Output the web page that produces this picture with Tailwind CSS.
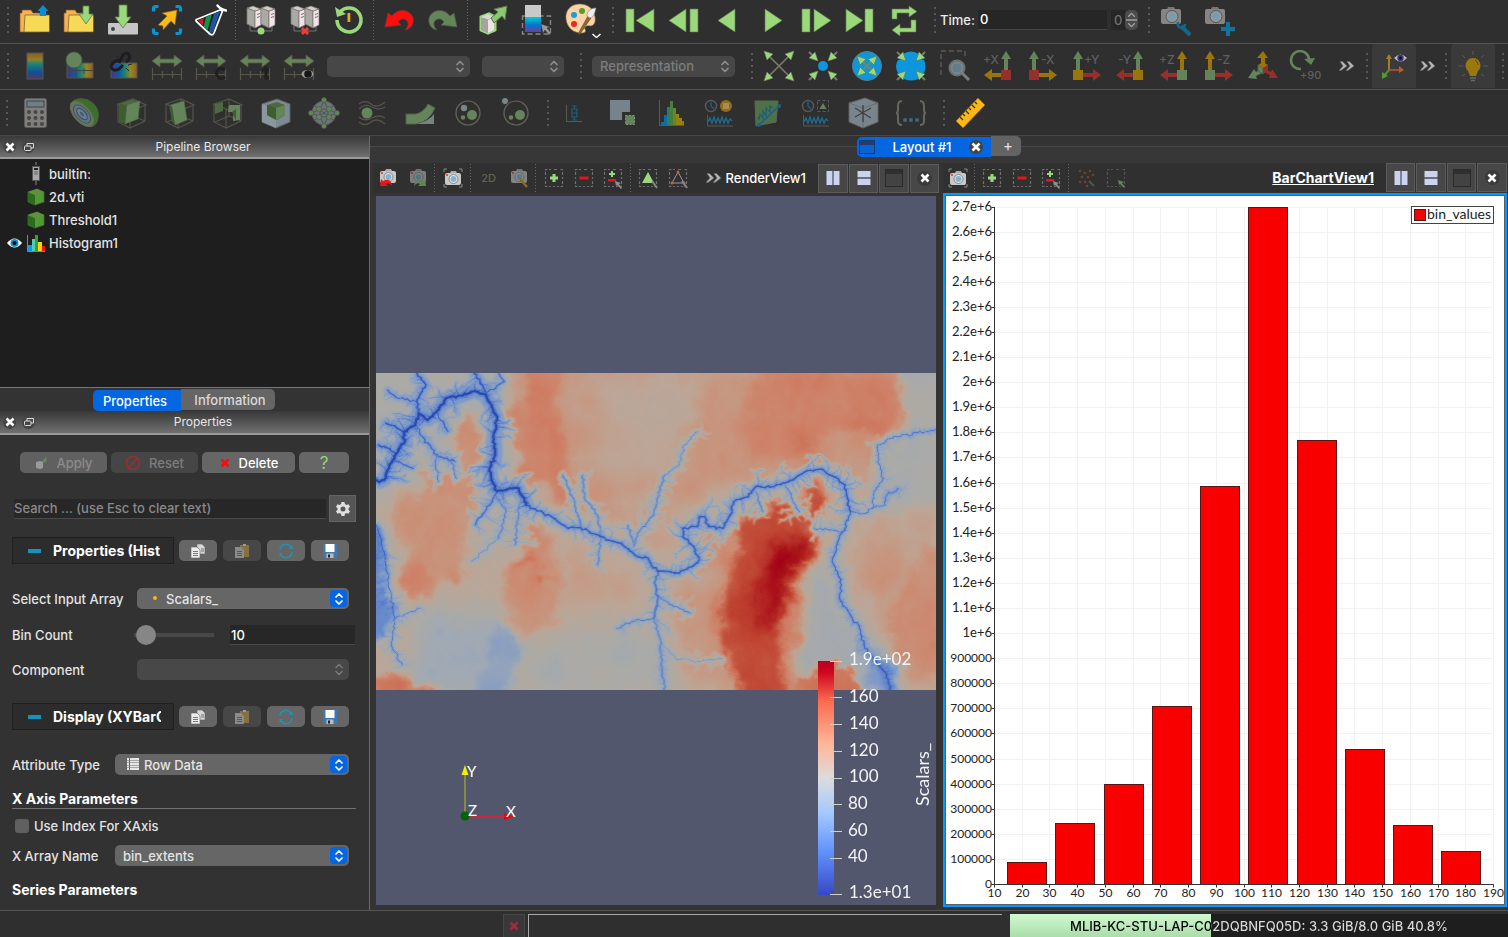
<!DOCTYPE html>
<html lang="en">
<head>
<meta charset="utf-8">
<title>ParaView</title>
<script src="https://cdn.jsdelivr.net/npm/@tailwindcss/browser@4"></script>
</head>
<body class="bg-[#2f2f2f]">
<svg class="absolute size-0" aria-hidden="true">
  <defs>
    <linearGradient id="rainbow" x1="0" y1="0" x2="0" y2="1"><stop offset="0" stop-color="#94581c"/><stop offset=".25" stop-color="#8a8428"/><stop offset=".45" stop-color="#17807a"/><stop offset=".75" stop-color="#124f96"/><stop offset="1" stop-color="#563565"/></linearGradient>
    <linearGradient id="rainbowH"><stop offset="0" stop-color="#4b3377"/><stop offset=".3" stop-color="#0d5a9e"/><stop offset=".55" stop-color="#24836c"/><stop offset=".75" stop-color="#8f8a22"/><stop offset="1" stop-color="#965c20"/></linearGradient>
    <linearGradient id="cyanPurple" x1="0" y1="0" x2="0" y2="1"><stop offset="0" stop-color="#00d0d0"/><stop offset=".5" stop-color="#0078d0"/><stop offset="1" stop-color="#6b3f9a"/></linearGradient>
    <linearGradient id="coolwarm" x1="0" y1="0" x2="0" y2="1"><stop offset="0" stop-color="#b8001f"/><stop offset=".05" stop-color="#cf0722"/><stop offset=".17" stop-color="#fb6a4e"/><stop offset=".35" stop-color="#ffb596"/><stop offset=".5" stop-color="#dcdcdc"/><stop offset=".65" stop-color="#a5c8fd"/><stop offset=".82" stop-color="#5f90fc"/><stop offset="1" stop-color="#3648c4"/></linearGradient>
  </defs>
  <symbol id="i-servers" viewBox="0 0 32 32">
    <path d="M5 21v6h22v-6" fill="none" stroke="#777"/>
    <g stroke="#77736a" stroke-width=".7"><path d="M2 4l8 3v17l-8-4z" fill="#aaa9a6"/><path d="M10 7l6-2v16l-6 3z" fill="#f0e4ea"/><path d="M2 4l6-2 8 3-6 2z" fill="#cfcfcc"/><path d="M16 4l8 3v17l-8-4z" fill="#aaa9a6"/><path d="M24 7l6-2v16l-6 3z" fill="#f0e4ea"/><path d="M16 4l6-2 8 3-6 2z" fill="#cfcfcc"/></g><path d="M12 10.500l3-1M12 13.500l3-1M26 10.500l3-1M26 13.500l3-1" stroke="#77736a"/>
  </symbol>
  <symbol id="i-range" viewBox="0 0 32 32">
    <path d="M1 11l8-6v4h14V5l8 6-8 6v-4H9v4z" fill="#64855a" stroke="#57554a" stroke-width=".8"/>
    <path d="M1.500 18v12M30.500 18v12M1 24.500h30M11.500 21v7M21.500 21v7" stroke="#57564c" stroke-width="1.200" fill="none"/>
  </symbol>
  <symbol id="i-box" viewBox="0 0 32 32">
    <path d="M2 7l15-5 13 6-13 5zM2 7v18l12 6V12M14 31l15-7V8M17 2v17L3 25M17 19l12 5" fill="none" stroke="#55534a" stroke-width="1.200"/>
  </symbol>
  <symbol id="i-chev" viewBox="0 0 10 14"><path d="M2 5l3-3 3 3M2 9l3 3 3-3" fill="none" stroke="currentColor" stroke-width="1.700" stroke-linecap="round" stroke-linejoin="round"/></symbol>
  <symbol id="i-more" viewBox="0 0 16 12"><path d="M1 1.500h2.500L8 6l-6 4.500H0L4 6zM8 1.500h2.500L15 6l-6 4.500H7L11 6z" fill="#b4b4b4" stroke="#666" stroke-width=".5"/></symbol>
  <symbol id="i-cam" viewBox="0 0 24 24">
    <rect x="4" y="7" width="16" height="12" rx="2" fill="#c9c9c9"/><path d="M9 7l1-2h5l1 2z" fill="#aaa"/><circle cx="12.500" cy="13" r="4.500" fill="#e9e9e9" stroke="#858585"/><circle cx="12.500" cy="13" r="3" fill="#7fb5d0"/><circle cx="6" cy="9" r="1" fill="#d33"/>
  </symbol>
  <symbol id="i-sel" viewBox="0 0 24 24"><path d="M3.500 9V3.500H9M12 3.500h3M20.500 9V3.500H17M3.500 15v5.500H9M20.500 15v5.500H15M3.500 11v2M20.500 11v2M11 20.500h2" fill="none" stroke="#6e6e6e" stroke-width="1.200" stroke-dasharray="3 1.500"/></symbol>
  <symbol id="i-plus" viewBox="0 0 24 24"><path d="M10.500 8h3v2.500H16v3h-2.500V16h-3v-2.500H8v-3h2.500z" fill="#9bd77b"/></symbol>
  <symbol id="i-minus" viewBox="0 0 24 24"><rect x="7.500" y="10.500" width="9" height="3" fill="#e8141c"/></symbol>
  <symbol id="i-plusminus" viewBox="0 0 24 24"><path d="M10 5h2v2h2v2h-2v2h-2V9H8V7h2z" fill="#9bd77b"/><rect x="7" y="13" width="8" height="2.500" fill="#e8141c"/><path d="M14 15l6 2-2 1 3 4-1 1-4-4-1 1z" fill="#8d8d8d"/></symbol>
  <symbol id="i-x" viewBox="0 0 12 12"><path d="M2.500 2.500l7 7M9.500 2.500l-7 7" stroke="currentColor" stroke-width="2.600"/></symbol>
  <symbol id="i-float" viewBox="0 0 12 12"><rect x="1.500" y="5" width="6.500" height="4.500" rx="1" fill="none" stroke="#ddd"/><path d="M4 5V2.500h6.500V7H8" fill="none" stroke="#ddd"/></symbol>
  <symbol id="i-cube" viewBox="0 0 18 18"><path d="M1 4l9-3 7 3v10l-9 3-7-3z" fill="#4f9a33" stroke="#53633f" stroke-width=".8"/><path d="M1 4l7 3v10l-7-3z" fill="#2c6b1c"/><path d="M1 4l9-3 7 3-9 3z" fill="#62903f"/></symbol>
  <symbol id="i-copy" viewBox="0 0 16 16"><path d="M7 1h5l3 3v7H7z" fill="#d6d6d6" stroke="#666" stroke-width=".6"/><path d="M1 4h6l3 3v8H1z" fill="#ececec" stroke="#666" stroke-width=".6"/><path d="M3 8.500h5M3 10.500h5M3 12.500h5M11 6h3M11 8h3" stroke="#777"/></symbol>
  <symbol id="i-paste" viewBox="0 0 16 16"><rect x="6" y="2" width="9" height="12" fill="#85703f"/><rect x="9" y="1" width="3" height="2" fill="#999"/><path d="M1 4h6l3 3v8H1z" fill="#8b8b8b"/><path d="M3 8.500h5M3 10.500h5M3 12.500h5" stroke="#555"/></symbol>
  <symbol id="i-refresh" viewBox="0 0 16 16"><path d="M2 7a6 6 0 0 1 11-3M14 9a6 6 0 0 1-11 3" fill="none" stroke="#1f93b5" stroke-width="1.500"/><path d="M14.500 2v4h-4zM1.500 14v-4h4z" fill="#1f93b5"/></symbol>
  <symbol id="i-save" viewBox="0 0 16 16"><path d="M1 1h14v14H2l-1-1z" fill="#3e78b4"/><rect x="3.500" y="1" width="9" height="8" fill="#fff"/><rect x="4.500" y="10.500" width="7" height="4.500" fill="#bbb"/><rect x="6" y="11.500" width="2" height="3" fill="#222"/></symbol>
  <symbol id="i-splitv" viewBox="0 0 14 16"><path d="M.5 1H6v14H.5zM8 1h5.500v14H8z" fill="#cbd3ee"/><path d="M6 1h2v14H6z" fill="#7c8296"/></symbol>
  <symbol id="i-splith" viewBox="0 0 14 16"><path d="M.5 1h13v6H.5zM.5 9h13v6H.5z" fill="#cbd3ee"/><path d="M.5 7h13v2H.5z" fill="#6a6f80"/></symbol>
  <symbol id="i-max" viewBox="0 0 18 18"><rect x=".5" y=".5" width="17" height="17" fill="#434343" stroke="#2b2b2b"/><rect x="1" y="1" width="16" height="4" fill="#2f2f2f"/></symbol>
</svg>

<div class="flex h-screen flex-col overflow-hidden bg-[#2f2f2f] font-['Inter',sans-serif] text-[13px] leading-4 font-medium text-[#e4e4e4]">

  <!-- Main controls -->
  <div role="toolbar" aria-label="Main controls" class="flex h-[43px] shrink-0 items-center pb-1">
    <div class="flex w-[13px] shrink-0 justify-end pr-1"><span class="h-[26px] w-0.5 bg-[repeating-linear-gradient(to_bottom,#585858_0_2px,transparent_2px_6px)]"></span></div>
    <button aria-label="Open" class="flex w-11 shrink-0 justify-center"><svg class="size-8" viewBox="0 0 32 32"><path d="M1 28V9h2V6h9l2 3h7v19z" fill="#fbb04c" stroke="#6b5a3a" stroke-width=".7"/><path d="M5 28l1-17h24.500v17z" fill="#f6d955" stroke="#6b5a3a" stroke-width=".7"/><path d="M24 1l5.500 6H27v5h-6V7h-2.500z" fill="#0b8fd0"/></svg></button>
    <button aria-label="Load state" class="flex w-11 shrink-0 justify-center"><svg class="size-8" viewBox="0 0 32 32"><path d="M1 28V9h2V6h9l2 3h7v19z" fill="#fbb04c" stroke="#6b5a3a" stroke-width=".7"/><path d="M5 28l1-17h24.500v17z" fill="#f6d955" stroke="#6b5a3a" stroke-width=".7"/><path d="M20 2h6v8h4l-7 10-7-10h4z" fill="#9bd77b" stroke="#5f7d4d" stroke-width=".8"/></svg></button>
    <button aria-label="Save data" class="flex w-11 shrink-0 justify-center"><svg class="size-8" viewBox="0 0 32 32"><rect x="1" y="19" width="30" height="11.500" rx="1" fill="#c6c6c6"/><circle cx="6" cy="25" r="2" fill="#444"/><path d="M12 1h8v12h4l-8 11L8 13h4z" fill="#9bd77b" stroke="#5f7d4d" stroke-width=".8"/></svg></button>
    <button aria-label="Save screenshot" class="flex w-11 shrink-0 justify-center"><svg class="size-8" viewBox="0 0 32 32"><path d="M2.500 7.500V4.500q0-2 2-2h3M24.500 2.500h3q2 0 2 2v3M29.500 24.500v3q0 2-2 2h-3M7.500 29.500h-3q-2 0-2-2v-3" fill="none" stroke="#0b93d2" stroke-width="3.200"/><path d="M26 6l-2 15-4-4-8 9 0-4-5-1 9-9-5-3z" fill="#fcb813" stroke="#7a6230" stroke-width=".6"/></svg></button>
    <button aria-label="Save state" class="flex w-11 shrink-0 justify-center"><svg class="size-8" viewBox="0 0 32 32"><path d="M25 6L1.500 15.500Q0.500 16.500 1.500 17.500L15.500 30.500Q18 31.500 19 29L27.500 7z" fill="#1d1d1d" stroke="#fff" stroke-width="1.800" stroke-linejoin="round"/><path d="M22.500 1.500Q25 5 31 6.500" fill="none" stroke="#fff" stroke-width="2.400" stroke-linecap="round"/><path d="M3 16.500l6-2.500-1.500 8z" fill="#d0182c"/><path d="M11 13l6-3-4.500 16.500-4-3.500z" fill="#12924a"/><path d="M19 9.500l6-2L18 28.500q-2 1-4-1z" fill="#1c56a0"/></svg></button>
    <div class="flex w-1.5 shrink-0 justify-start"><span class="ml-0.5 h-10 w-px bg-[repeating-linear-gradient(to_bottom,#666_0_1px,transparent_1px_3px)]"></span></div>
    <button aria-label="Connect" class="flex w-11 shrink-0 justify-center"><svg class="size-8" viewBox="0 0 32 32"><use href="#i-servers"/><circle cx="16" cy="27" r="3.500" fill="#9bd77b"/></svg></button>
    <button aria-label="Disconnect" class="flex w-11 shrink-0 justify-center"><svg class="size-8" viewBox="0 0 32 32"><use href="#i-servers"/><path d="M13 24l6 6M19 24l-6 6" stroke="#e8413a" stroke-width="3"/></svg></button>
    <button aria-label="Reset session" class="flex w-11 shrink-0 justify-center"><svg class="size-8" viewBox="0 0 32 32"><path d="M7 8a12 12 0 1 1-3 8" fill="none" stroke="#9bd77b" stroke-width="3.600"/><path d="M2 3l2 10 9-3z" fill="#9bd77b"/><rect x="14.500" y="9" width="2.800" height="9" fill="#e8a916"/></svg></button>
    <div class="flex w-1.5 shrink-0 justify-start"><span class="ml-0.5 h-10 w-px bg-[repeating-linear-gradient(to_bottom,#666_0_1px,transparent_1px_3px)]"></span></div>
    <button aria-label="Undo" class="flex w-11 shrink-0 justify-center"><svg class="size-8" viewBox="0 0 32 32"><path d="M2 23L5 9l4 3C15 4 27 5 30 14c1 6-2 11-8 12 4-4 4-8 1-10-3-2-6-1-8 2l3 3z" fill="#fe0d0d" stroke="#7a3a30" stroke-width=".7"/></svg></button>
    <button aria-label="Redo" disabled class="flex w-11 shrink-0 justify-center"><svg class="size-8" viewBox="0 0 32 32"><path d="M30 23L27 9l-4 3C17 4 5 5 2 14c-1 6 2 11 8 12-4-4-4-8-1-10 3-2 6-1 8 2l-3 3z" fill="#64855a" stroke="#4d5a45" stroke-width=".7"/></svg></button>
    <div class="flex w-1.5 shrink-0 justify-start"><span class="ml-0.5 h-10 w-px bg-[repeating-linear-gradient(to_bottom,#666_0_1px,transparent_1px_3px)]"></span></div>
    <button aria-label="Extract" class="flex w-11 shrink-0 justify-center"><svg class="size-8" viewBox="0 0 32 32"><path d="M4 13l8-3 6 3v13l-7 3-7-3z" fill="none" stroke="#9bd77b" stroke-width="3"/><path d="M4 13l7 3v13l-7-3z" fill="#a5a3a0"/><path d="M11 16l6-3v13l-6 3z" fill="#efe3e8"/><path d="M4 13l7-3 6 3-6 3z" fill="#d8d8d8"/><path d="M30 2l-2 14-3-4-8 7-3-5 7-6-4-3z" fill="#8cc872" stroke="#5a7549"/></svg></button>
    <button aria-label="Edit color map" class="flex w-11 shrink-0 justify-center"><svg class="size-8" viewBox="0 0 32 32"><rect x="1.500" y="12" width="28" height="18" fill="none" stroke="#888" stroke-width="1.400" stroke-dasharray="5 3"/><rect x="4" y="1" width="16" height="27" fill="#c9c9c9"/><rect x="4" y="13" width="16" height="15" fill="url(#cyanPurple)"/><path d="M20 20l9 3-3 1 4 5-2 2-4-5-2 3z" fill="#999" stroke="#444" stroke-width=".5"/></svg></button>
    <button aria-label="Load palette" class="flex w-11 shrink-0 justify-center"><svg class="h-9 w-10" viewBox="-4 -2 40 36"><path d="M15 0C6 0 0 6 1 15s8 14 15 14c5 0 5-2 4-4s2-4 5-3c4 0 6-4 5-9C29 5 23 0 15 0z" fill="#fbd3a4" stroke="#80694c" stroke-width=".6"/><circle cx="9" cy="11" r="3" fill="#16a0d8"/><circle cx="17" cy="7" r="3" fill="#5a9a2a"/><circle cx="9" cy="20" r="3" fill="#e8291c"/><path d="M13 30L23 12l3 2-11 16z" fill="#8a6b35" stroke="#5b4727" stroke-width=".6"/><path d="M22 12c0-5 4-8 9-8-1 4-2 9-6 10z" fill="#eee" stroke="#888" stroke-width=".6"/><path d="M27.500 30l4 3.500 4-3.500" fill="none" stroke="#fff" stroke-width="1.500"/></svg></button>
    <div class="flex w-[15px] shrink-0 justify-end pr-1"><span class="h-[26px] w-0.5 bg-[repeating-linear-gradient(to_bottom,#585858_0_2px,transparent_2px_6px)]"></span></div>
    <button aria-label="First frame" class="flex w-11 shrink-0 justify-center"><svg class="size-8" viewBox="0 0 32 32" fill="#9bd77b" stroke="#5f7d4d" stroke-width=".6"><path d="M2 5h8v23H2zM30 5v23L12 16.500z"/></svg></button>
    <button aria-label="Previous frame" class="flex w-11 shrink-0 justify-center"><svg class="size-8" viewBox="0 0 32 32" fill="#9bd77b" stroke="#5f7d4d" stroke-width=".6"><path d="M18 5v23L1 16.500zM22 5h8v23h-8z"/></svg></button>
    <button aria-label="Reverse" class="flex w-11 shrink-0 justify-center"><svg class="size-8" viewBox="0 0 32 32" fill="#9bd77b" stroke="#5f7d4d" stroke-width=".6"><path d="M23 5v23L6 16.500z"/></svg></button>
    <button aria-label="Play" class="flex w-11 shrink-0 justify-center"><svg class="size-8" viewBox="0 0 32 32" fill="#9bd77b" stroke="#5f7d4d" stroke-width=".6"><path d="M9 5v23l17-11.500z"/></svg></button>
    <button aria-label="Next frame" class="flex w-11 shrink-0 justify-center"><svg class="size-8" viewBox="0 0 32 32" fill="#9bd77b" stroke="#5f7d4d" stroke-width=".6"><path d="M2 5h8v23H2zM14 5v23l17-11.500z"/></svg></button>
    <button aria-label="Last frame" class="flex w-11 shrink-0 justify-center"><svg class="size-8" viewBox="0 0 32 32" fill="#9bd77b" stroke="#5f7d4d" stroke-width=".6"><path d="M2 5v23l17-11.500zM21 5h8v23h-8z"/></svg></button>
    <button aria-label="Loop" class="flex w-11 shrink-0 justify-center"><svg class="size-8" viewBox="0 0 32 32" fill="#9bd77b" stroke="#5f7d4d" stroke-width=".6"><path d="M4 15V5h17V2l8 5.500-8 5.500v-4H9v6zM28 16v12H12v4l-8-6 8-6v4h11v-8z"/></svg></button>
    <div class="flex w-[14px] shrink-0 justify-end pr-1"><span class="h-[26px] w-0.5 bg-[repeating-linear-gradient(to_bottom,#585858_0_2px,transparent_2px_6px)]"></span></div>
    <label for="time" class="w-[38px] shrink-0 text-[#ececec]">Time:</label>
    <input id="time" value="0" class="h-5 w-[129px] border-b border-[#454545] bg-[#262626] px-0.5 text-white outline-none">
    <input aria-label="Time step" value="0" disabled class="ml-1 h-5 w-3.5 bg-[#262626] px-[3px] text-[#6e6e6e]">
    <button aria-label="Step time" disabled class="flex h-5 w-[13px] items-center justify-center rounded-[5px] bg-[#4c4c4c] text-[#a0a0a0]"><svg class="h-5 w-[11px]" viewBox="0 0 10 18"><path d="M2 6l3-3 3 3M2 12l3 3 3-3M0 9h10" fill="none" stroke="currentColor" stroke-width="1.200"/></svg></button>
    <div class="flex w-4 shrink-0 justify-end pr-1"><span class="h-[26px] w-0.5 bg-[repeating-linear-gradient(to_bottom,#585858_0_2px,transparent_2px_6px)]"></span></div>
    <button aria-label="Adjust camera" disabled class="flex w-11 shrink-0 justify-center"><svg class="size-8" viewBox="0 0 32 32"><rect x="1" y="5" width="20" height="15" rx="2" fill="#858585"/><path d="M7 5l1-2h6l1 2z" fill="#777"/><circle cx="12" cy="12.500" r="6" fill="#999" stroke="#555"/><circle cx="12" cy="12.500" r="3.500" fill="#6fa0b5"/><path d="M21 22l9 9" stroke="#12688c" stroke-width="4"/><path d="M18 18q-1 5 3 6 4 0 4-4" fill="none" stroke="#12688c" stroke-width="2.600"/></svg></button>
    <button aria-label="Add camera" disabled class="flex w-11 shrink-0 justify-center"><svg class="size-8" viewBox="0 0 32 32"><rect x="1" y="5" width="20" height="15" rx="2" fill="#858585"/><path d="M7 5l1-2h6l1 2z" fill="#777"/><circle cx="12" cy="12.500" r="6" fill="#999" stroke="#555"/><circle cx="12" cy="12.500" r="3.500" fill="#6fa0b5"/><path d="M22 18h4v5h5v4h-5v5h-4v-5h-5v-4h5z" fill="#12749c"/></svg></button>
  </div>

  <!-- Color and camera controls -->
  <div role="toolbar" aria-label="Color and camera" class="flex h-[46px] shrink-0 items-center border-t border-[#555] pb-px">
    <div class="flex w-[13px] shrink-0 justify-end pr-1"><span class="h-[26px] w-0.5 bg-[repeating-linear-gradient(to_bottom,#585858_0_2px,transparent_2px_6px)]"></span></div>
    <button aria-label="Color legend" disabled class="flex w-11 shrink-0 justify-center"><svg class="size-8" viewBox="0 0 32 32"><rect x="8" y="3" width="16" height="26" fill="url(#rainbow)" stroke="#575757"/></svg></button>
    <button aria-label="Edit colors" disabled class="flex w-11 shrink-0 justify-center"><svg class="size-8" viewBox="0 0 32 32"><path d="M4 13h26v15H4z" fill="url(#rainbowH)" stroke="#555"/><path d="M4 20.500h26M13 13v15M21 18v6" stroke="#444"/><circle cx="11" cy="10" r="8" fill="#64855a" stroke="#4d5a45"/></svg></button>
    <button aria-label="Separate color map" disabled class="flex w-11 shrink-0 justify-center"><svg class="size-8" viewBox="0 0 32 32"><path d="M4 13h26v15H4z" fill="url(#rainbowH)" stroke="#555"/><path d="M12 13l4-8q4-4 6 0t-3 7M12 10q-8 2-8 7 2 5 8 2l4-4" fill="none" stroke="#1c1c22" stroke-width="3"/><path d="M21 15l4-1M19 18l3 3M10 6l1 2" stroke="#222"/></svg></button>
    <button aria-label="Rescale to data range" disabled class="flex w-11 shrink-0 justify-center"><svg class="size-8"><use href="#i-range"/></svg></button>
    <button aria-label="Rescale to custom range" disabled class="flex w-11 shrink-0 justify-center"><svg class="size-8" viewBox="0 0 32 32"><use href="#i-range"/><path d="M30 20a5 5 0 1 0 0 7" fill="none" stroke="#202020" stroke-width="3"/></svg></button>
    <button aria-label="Rescale over time" disabled class="flex w-11 shrink-0 justify-center"><svg class="size-8" viewBox="0 0 32 32"><use href="#i-range"/><path d="M27 16v12h3M23 20h7" fill="none" stroke="#202020" stroke-width="3"/></svg></button>
    <button aria-label="Rescale to visible range" disabled class="flex w-11 shrink-0 justify-center"><svg class="size-8" viewBox="0 0 32 32"><use href="#i-range"/><ellipse cx="24.500" cy="24" rx="6" ry="4" fill="#9a9a9a"/><circle cx="25" cy="24" r="3.800" fill="#161616"/></svg></button>
    <div class="relative ml-1.5 h-[21px] w-[143px] shrink-0 text-[#8e8e8e]"><select aria-label="Color array" disabled class="h-full w-full appearance-none rounded-[5px] bg-[#474747]"><option></option></select><svg class="absolute top-[3px] right-[5px] h-[15px] w-2.5"><use href="#i-chev"/></svg></div>
    <div class="relative ml-3 h-[21px] w-[82px] shrink-0 text-[#8e8e8e]"><select aria-label="Component mode" disabled class="h-full w-full appearance-none rounded-[5px] bg-[#474747]"><option></option></select><svg class="absolute top-[3px] right-[5px] h-[15px] w-2.5"><use href="#i-chev"/></svg></div>
    <div class="flex w-[22px] shrink-0 justify-end pr-1"><span class="h-[26px] w-0.5 bg-[repeating-linear-gradient(to_bottom,#585858_0_2px,transparent_2px_6px)]"></span></div>
    <div class="relative ml-1.5 h-[21px] w-[143px] shrink-0 text-[#8e8e8e]"><select aria-label="Representation" disabled class="h-full w-full appearance-none rounded-[5px] bg-[#474747] pl-2 text-[#7d7d7d] opacity-100"><option>Representation</option></select><svg class="absolute top-[3px] right-[5px] h-[15px] w-2.5"><use href="#i-chev"/></svg></div>
    <div class="flex w-[22px] shrink-0 justify-end pr-1"><span class="h-[26px] w-0.5 bg-[repeating-linear-gradient(to_bottom,#585858_0_2px,transparent_2px_6px)]"></span></div>
    <button aria-label="Reset camera" class="flex w-11 shrink-0 justify-center"><svg class="size-8" viewBox="0 0 32 32"><path d="M5 5l22 22M27 5L5 27" stroke="#7d7b6c" stroke-width="1.600"/><path d="M1 1l9 3-6 6zM31 1l-9 3 6 6zM1 31l9-3-6-6zM31 31l-9-3 6-6z" fill="#9bd77b" stroke="#6d7a5c" stroke-width=".6"/></svg></button>
    <button aria-label="Zoom to data" class="flex w-11 shrink-0 justify-center"><svg class="size-8" viewBox="0 0 32 32"><path d="M2 2l7 7M30 2l-7 7M2 30l7-7M30 30l-7-7" stroke="#7d7b6c" stroke-width="2"/><path d="M11 11L2 8l6-6zM21 11l9-3-6-6zM11 21l-9 3 6 6zM21 21l9 3-6 6z" fill="#9bd77b" stroke="#6d7a5c" stroke-width=".6"/><circle cx="16" cy="16" r="5" fill="#0d96dc"/></svg></button>
    <button aria-label="Reset camera closest" class="flex w-11 shrink-0 justify-center"><svg class="size-8" viewBox="0 0 32 32"><circle cx="16" cy="16" r="14.500" fill="#0d96dc" stroke="#5d7d88"/><path d="M8 8l16 16M24 8L8 24" stroke="#6f8a70" stroke-width="2"/><path d="M6 6l9 3-6 6zM26 6l-9 3 6 6zM6 26l9-3-6-6zM26 26l-9-3 6-6z" fill="#9bd77b" stroke="#527a5c" stroke-width=".6"/></svg></button>
    <button aria-label="Zoom closest to data" class="flex w-11 shrink-0 justify-center"><svg class="size-8" viewBox="0 0 32 32"><path d="M8 4q8-5 16 0l1 5 4 1q3 6 0 13l-5 1-1 5q-7 3-14 0l-1-5-5-1q-4-7 0-13l5-1z" fill="#0d96dc"/><path d="M2 2l7 7M30 2l-7 7M2 30l7-7M30 30l-7-7" stroke="#7d7b6c" stroke-width="2"/><path d="M11 11L2 8l6-6zM21 11l9-3-6-6zM11 21l-9 3 6 6zM21 21l9 3-6 6z" fill="#9bd77b" stroke="#527a5c" stroke-width=".6"/></svg></button>
    <button aria-label="Zoom to box" disabled class="flex w-11 shrink-0 justify-center"><svg class="size-8" viewBox="0 0 32 32"><path d="M2 25V1h24v6" fill="none" stroke="#5b5b5b" stroke-width="1.400" stroke-dasharray="5 3"/><circle cx="18" cy="18" r="7.500" fill="#7a868e" stroke="#707070" stroke-width="2"/><circle cx="18" cy="18" r="4.500" fill="#5f7f8e"/><path d="M23 23l7 7" stroke="#7c7c7c" stroke-width="3"/></svg></button>
    <button aria-label="Set view +X" disabled class="flex w-11 shrink-0 justify-center"><svg class="size-8" viewBox="0 0 32 32"><path d="M21 23V9h-3l5-8 5 8h-3v14z" fill="#64855a"/><path d="M18 23H9v-4l-8 6 8 6v-4h9z" fill="#9a7509"/><rect x="18" y="20" width="10" height="10" fill="#97302c"/><text x="0" y="14" font-size="12" fill="#5f5f5f">+X</text></svg></button>
    <button aria-label="Set view -X" disabled class="flex w-11 shrink-0 justify-center"><svg class="size-8" viewBox="0 0 32 32"><path d="M5 23V9H2l5-8 5 8H9v14z" fill="#64855a"/><path d="M12 23h10v-4l8 6-8 6v-4H12z" fill="#9a7509"/><rect x="2" y="20" width="10" height="10" fill="#97302c"/><text x="14" y="14" font-size="12" fill="#5f5f5f">-X</text></svg></button>
    <button aria-label="Set view +Y" disabled class="flex w-11 shrink-0 justify-center"><svg class="size-8" viewBox="0 0 32 32"><path d="M5 23V9H2l5-8 5 8H9v14z" fill="#64855a"/><path d="M12 23h10v-4l8 6-8 6v-4H12z" fill="#97302c"/><rect x="2" y="20" width="10" height="10" fill="#9a7509"/><text x="13" y="14" font-size="12" fill="#5f5f5f">+Y</text></svg></button>
    <button aria-label="Set view -Y" disabled class="flex w-11 shrink-0 justify-center"><svg class="size-8" viewBox="0 0 32 32"><path d="M21 23V9h-3l5-8 5 8h-3v14z" fill="#64855a"/><path d="M18 23H9v-4l-8 6 8 6v-4h9z" fill="#97302c"/><rect x="18" y="20" width="10" height="10" fill="#9a7509"/><text x="3" y="14" font-size="12" fill="#5f5f5f">-Y</text></svg></button>
    <button aria-label="Set view +Z" disabled class="flex w-11 shrink-0 justify-center"><svg class="size-8" viewBox="0 0 32 32"><path d="M21 23V9h-3l5-8 5 8h-3v14z" fill="#9a7509"/><path d="M18 23H9v-4l-8 6 8 6v-4h9z" fill="#97302c"/><rect x="18" y="20" width="10" height="10" fill="#64855a"/><text x="0" y="14" font-size="12" fill="#5f5f5f">+Z</text></svg></button>
    <button aria-label="Set view -Z" disabled class="flex w-11 shrink-0 justify-center"><svg class="size-8" viewBox="0 0 32 32"><path d="M5 23V9H2l5-8 5 8H9v14z" fill="#9a7509"/><path d="M12 23h10v-4l8 6-8 6v-4H12z" fill="#97302c"/><rect x="2" y="20" width="10" height="10" fill="#64855a"/><text x="14" y="14" font-size="12" fill="#5f5f5f">-Z</text></svg></button>
    <button aria-label="Isometric view" disabled class="flex w-11 shrink-0 justify-center"><svg class="size-8" viewBox="0 0 32 32"><path d="M14 14V8h-4l6-7 5 7h-3v6l-2 2z" fill="#9a7509"/><path d="M13 19l-4 3-2-3-6 9 9 1-1-3 6-3z" fill="#64855a"/><path d="M19 19l5 3 1-3 6 9-9 0 1-3-6-3z" fill="#97302c"/><path d="M11 15l5 3v6l-5-3z" fill="#64855a" stroke="#464"/><path d="M21 15l-5 3v6l5-3z" fill="#97302c"/><path d="M11 15l5-3 5 3-5 3z" fill="#9a7509"/></svg></button>
    <button aria-label="Rotate 90 degrees" disabled class="flex w-11 shrink-0 justify-center"><svg class="h-8 w-10" viewBox="0 0 40 32"><path d="M14 19a9 9 0 1 1 8-9" fill="none" stroke="#64855a" stroke-width="2.600"/><path d="M17 9l11-1-4 7z" fill="#64855a"/><text x="13" y="29" font-size="11" fill="#5f5f5f">+90</text></svg></button>
    <button aria-label="More camera controls" class="flex w-9 shrink-0 justify-center"><svg class="h-3 w-4"><use href="#i-more"/></svg></button>
    <div class="flex w-[7px] shrink-0 justify-end pr-1"><span class="h-[26px] w-0.5 bg-[repeating-linear-gradient(to_bottom,#585858_0_2px,transparent_2px_6px)]"></span></div>
    <button aria-label="Show orientation axes" class="flex h-11 w-11 shrink-0 items-center justify-center rounded-t bg-[#3a3a3a]"><svg class="size-8" viewBox="0 0 32 32"><path d="M11 21V7" stroke="#a87a2a" stroke-width="2"/><path d="M8 9l3-5 3 5z" fill="#a87a2a"/><path d="M11 20h13" stroke="#a84a30" stroke-width="2"/><path d="M21 16l5 4-5 3z" fill="#c8552e"/><path d="M11 20l-5 6" stroke="#5a8a3a" stroke-width="2"/><path d="M4 22v7l6-3z" fill="#4f9a33"/><path d="M16 8q6.500-7 13 0-6.500 7-13 0z" fill="#bdbdca"/><circle cx="22.500" cy="8" r="3.200" fill="#3a3a7a"/><circle cx="22.500" cy="8" r="1.500" fill="#111"/></svg></button>
    <button aria-label="More axes controls" class="flex w-[23px] shrink-0 justify-center"><svg class="h-3 w-4"><use href="#i-more"/></svg></button>
    <div class="flex w-3 shrink-0 justify-end pr-1"><span class="h-[26px] w-0.5 bg-[repeating-linear-gradient(to_bottom,#585858_0_2px,transparent_2px_6px)]"></span></div>
    <button aria-label="Light kit" disabled class="flex h-11 w-11 shrink-0 items-center justify-center rounded-t bg-[#3a3a3a]"><svg class="size-8" viewBox="0 0 32 32"><path d="M16 1v4M1 16h5M26 16h5M5 5l3 3M27 5l-3 3M5 26l3-2M27 26l-3-2" stroke="#5a5a5a"/><path d="M16 8a7.500 7.500 0 0 1 5 13l-2 5h-6l-2-5A7.500 7.500 0 0 1 16 8z" fill="#9a7810"/><path d="M18 10q3 2 3 5" fill="none" stroke="#5d4a10"/><path d="M13 28h6M14 30.500h4" stroke="#6a6a6a" stroke-width="1.500"/></svg></button>
    <div class="flex w-[13px] shrink-0 justify-end pr-1"><span class="h-[26px] w-0.5 bg-[repeating-linear-gradient(to_bottom,#585858_0_2px,transparent_2px_6px)]"></span></div>
  </div>

  <!-- Filters -->
  <div role="toolbar" aria-label="Filters" class="flex h-[47px] shrink-0 items-center border-y border-t-[#555] border-b-[#474747]">
    <div class="flex w-[12px] shrink-0 justify-end pr-1"><span class="h-[26px] w-0.5 bg-[repeating-linear-gradient(to_bottom,#585858_0_2px,transparent_2px_6px)]"></span></div>
    <button aria-label="Calculator" disabled class="flex w-12 shrink-0 justify-center"><svg class="size-8" viewBox="0 0 32 32"><rect x="4.500" y="1.500" width="22" height="29" rx="2" fill="#7f7f7f" stroke="#5c5c5c"/><rect x="7" y="4" width="17" height="6" fill="#6f7f88" stroke="#454545"/><g fill="#4a463f"><circle cx="9" cy="15" r="2"/><circle cx="15.500" cy="15" r="2"/><circle cx="22" cy="15" r="2"/><circle cx="9" cy="21" r="2"/><circle cx="15.500" cy="21" r="2"/><circle cx="22" cy="21" r="2"/><circle cx="9" cy="27" r="2"/><circle cx="15.500" cy="27" r="2"/><circle cx="22" cy="27" r="2"/></g></svg></button>
    <button aria-label="Contour" disabled class="flex w-12 shrink-0 justify-center"><svg class="size-8" viewBox="0 0 32 32"><path d="M2 7Q8-1 20 3q12 6 10 18-1 8-8 9z" fill="#3d6e2b" stroke="#565b48"/><ellipse cx="14" cy="17" rx="8" ry="15" transform="rotate(-42 14 17)" fill="#5f7a54" stroke="#6b6a5c"/><ellipse cx="14" cy="17" rx="6" ry="11" transform="rotate(-42 14 17)" fill="#5c7488" stroke="#4a5560"/><ellipse cx="14" cy="17" rx="3.500" ry="7" transform="rotate(-42 14 17)" fill="#6a8090" stroke="#3f4c58"/><ellipse cx="14" cy="17" rx="1.500" ry="3" transform="rotate(-42 14 17)" fill="#48606c"/></svg></button>
    <button aria-label="Clip" disabled class="flex w-12 shrink-0 justify-center"><svg class="size-8" viewBox="0 0 32 32"><use href="#i-box"/><path d="M3 8l8-3-2 22-6-2z" fill="#3e5e30"/><path d="M11 7l13-3-2 18-13 5z" fill="#64855a" stroke="#50684a" stroke-width=".6"/><path d="M3 7l12-4 9 1-13 4z" fill="#4c6940"/></svg></button>
    <button aria-label="Slice" disabled class="flex w-12 shrink-0 justify-center"><svg class="size-8" viewBox="0 0 32 32"><use href="#i-box"/><path d="M6 8l14-4 3 19-12 5z" fill="#64855a" stroke="#50684a" stroke-width=".6"/><path d="M5 8l3 1 3 19-3-3z" fill="#3e5e30"/></svg></button>
    <button aria-label="Threshold" disabled class="flex w-12 shrink-0 justify-center"><svg class="size-8" viewBox="0 0 32 32"><use href="#i-box"/><path d="M3 7l8-2v9l-8 3z" fill="#4c6940"/><path d="M17 8l11 0v15l-7 1v-9h-5z" fill="#64855a"/><path d="M20 15l4-3v12z" fill="#3e5e30"/></svg></button>
    <button aria-label="Extract subset" disabled class="flex w-12 shrink-0 justify-center"><svg class="size-8" viewBox="0 0 32 32"><path d="M2 7l15-5 13 5v18l-14 6-14-6z" fill="#7b8a94" stroke="#60625c"/><path d="M2 7l14 6v18L2 25z" fill="#8a979f"/><path d="M7 8l10-3 8 3v10l-8 5-10-5z" fill="#4c6940"/><path d="M16 11l9-3v10l-9 5z" fill="#64855a"/><path d="M7 8l9 3v12l-9-5z" fill="#3e5e30"/></svg></button>
    <button aria-label="Glyph" disabled class="flex w-12 shrink-0 justify-center"><svg class="size-8" viewBox="0 0 32 32"><circle cx="16" cy="16" r="12" fill="#69747b" stroke="#5d5c52"/><path d="M4 16Q16 8 28 16Q16 24 4 16M16 4Q8 16 16 28Q24 16 16 4M7 9l18 14M25 9L7 23" fill="none" stroke="#4d5648"/><g fill="#64855a" stroke="#4b5a43" stroke-width=".6"><circle cx="16" cy="3" r="2.500"/><circle cx="16" cy="29" r="2.500"/><circle cx="3" cy="16" r="2.500"/><circle cx="29" cy="16" r="2.500"/><circle cx="11" cy="12" r="2.500"/><circle cx="21" cy="12" r="2.500"/><circle cx="11" cy="20" r="2.500"/><circle cx="21" cy="20" r="2.500"/></g></svg></button>
    <button aria-label="Stream tracer" disabled class="flex w-12 shrink-0 justify-center"><svg class="size-8" viewBox="0 0 32 32"><path d="M3 7q6-5 12 0t14-2M3 12q6-6 13-2t13 0M3 20q6 5 13 1t13 0M3 25q6 5 12 0t14 2" fill="none" stroke="#555348" stroke-width="1.400"/><circle cx="11" cy="16" r="5.500" fill="#64855a"/></svg></button>
    <button aria-label="Warp by vector" disabled class="flex w-12 shrink-0 justify-center"><svg class="size-8" viewBox="0 0 32 32"><path d="M2 17h10q8-2 12-10l7 4Q25 25 12 27H2z" fill="#64855a" stroke="#50604a"/><path d="M13 27q12-3 17-10v10z" fill="#77837f"/></svg></button>
    <button aria-label="Group datasets" disabled class="flex w-12 shrink-0 justify-center"><svg class="size-8" viewBox="0 0 32 32"><circle cx="16" cy="16" r="12" fill="none" stroke="#66665f" stroke-width="1.200"/><circle cx="12" cy="11" r="3.200" fill="#7b8588"/><circle cx="20" cy="18" r="5" fill="#64855a"/><circle cx="11" cy="20.500" r="2.200" fill="#64855a"/></svg></button>
    <button aria-label="Extract level" disabled class="flex w-12 shrink-0 justify-center"><svg class="size-8" viewBox="0 0 32 32"><circle cx="16" cy="16" r="12" fill="none" stroke="#66665f" stroke-width="1.200"/><circle cx="5" cy="4" r="3.600" fill="#7b8588" stroke="#2f2f2f"/><circle cx="20" cy="18" r="5" fill="#64855a"/><circle cx="11" cy="20.500" r="2.200" fill="#64855a"/></svg></button>
    <div class="flex w-[11px] shrink-0 justify-end pr-0.5"><span class="h-[26px] w-0.5 bg-[repeating-linear-gradient(to_bottom,#585858_0_2px,transparent_2px_6px)]"></span></div>
    <button aria-label="Quartile chart" disabled class="flex w-12 shrink-0 justify-center"><svg class="size-8" viewBox="0 0 32 32"><path d="M7.500 8v16.500H23" fill="none" stroke="#5c5a50"/><path d="M15.500 9v3M15.500 20v3M13 9h5M13 23h5M13 12h5v8h-5zM13 16h5" fill="none" stroke="#1d5d80" stroke-width="1.200"/></svg></button>
    <button aria-label="Extract block" disabled class="flex w-12 shrink-0 justify-center"><svg class="size-8" viewBox="0 0 32 32"><path d="M3 3h20v12h-8v8H3z" fill="#77838c"/><rect x="18.500" y="18.500" width="9" height="9" fill="#64855a" stroke="#8a8a78" stroke-dasharray="2 1.500"/></svg></button>
    <button aria-label="Histogram" disabled class="flex w-12 shrink-0 justify-center"><svg class="size-8" viewBox="0 0 32 32"><path d="M4.500 3v25.500H29" fill="none" stroke="#5c5a50"/><path d="M6 25h3v3H6zM9 18h3v10H9z" fill="#0f6ea0"/><path d="M12 10h3v18h-3z" fill="#2f7a70"/><path d="M15 4h3v24h-3z" fill="#45803a"/><path d="M18 11h3v17h-3z" fill="#6c8230"/><path d="M21 17h3v11h-3zM24 21h3v7h-3z" fill="#96820f"/><path d="M27 24h2v4h-2z" fill="#a0700f"/></svg></button>
    <button aria-label="Plot data over time" disabled class="flex w-12 shrink-0 justify-center"><svg class="size-8" viewBox="0 0 32 32"><circle cx="8" cy="9" r="5.500" fill="none" stroke="#5a5a5a" stroke-width="1.400"/><path d="M8 5v4l3 3" fill="none" stroke="#1d5d80" stroke-width="1.500"/><circle cx="23" cy="9" r="6" fill="#8f6c1a"/><rect x="20" y="6" width="6" height="6" fill="#a78b50"/><path d="M4.500 18v11H30" fill="none" stroke="#5c5a50"/><path d="M5 25l2-4 2 5 2-6 2 6 2-5 2 5 2-6 2 6 2-5 2 5 2-4 2 2" fill="none" stroke="#1d6a90" stroke-width="1.400"/></svg></button>
    <button aria-label="Plot over line" disabled class="flex w-12 shrink-0 justify-center"><svg class="size-8" viewBox="0 0 32 32"><path d="M4 4h23l-2 21-20 4z" fill="#4f7146" stroke="#5b6a50"/><path d="M7 20l1 3 1-6 3 4 0-7 3 5 0-8 4 4 0-6 3 2" fill="none" stroke="#1d5d80" stroke-width="1.300"/><path d="M8 28L28 9" stroke="#1b5f92" stroke-width="1.600"/><circle cx="8" cy="28" r="2" fill="#1b5f92"/><circle cx="28" cy="9" r="2" fill="#1b5f92"/></svg></button>
    <button aria-label="Plot selection over time" disabled class="flex w-12 shrink-0 justify-center"><svg class="size-8" viewBox="0 0 32 32"><circle cx="9" cy="9" r="5.500" fill="none" stroke="#5a5a5a" stroke-width="1.400"/><path d="M9 5v4l3 3" fill="none" stroke="#1d5d80" stroke-width="1.500"/><rect x="18.500" y="3.500" width="11" height="11" fill="none" stroke="#5a5a5a" stroke-dasharray="3 2"/><path d="M24 6l3.500 6h-7z" fill="#64855a"/><path d="M4.500 18v11H30" fill="none" stroke="#5c5a50"/><path d="M5 25l2-4 2 5 2-6 2 6 2-5 2 5 2-6 2 6 2-5 2 5 2-4 2 2" fill="none" stroke="#1d6a90" stroke-width="1.400"/></svg></button>
    <button aria-label="Probe" disabled class="flex w-12 shrink-0 justify-center"><svg class="size-8" viewBox="0 0 32 32"><path d="M2 6l16-5 13 5v19l-15 6-14-6z" fill="#79848c" stroke="#60625c"/><path d="M2 6l14 5 15-5M16 11v20" fill="none" stroke="#686f74"/><path d="M16 8v17M8 11l16 10M24 11L8 20" stroke="#3d4043" stroke-width="1.300"/></svg></button>
    <button aria-label="Programmable filter" disabled class="flex w-12 shrink-0 justify-center"><svg class="size-8" viewBox="0 0 32 32"><path d="M7 4q-4 0-4 5v4q0 3-2 3 2 0 2 3v5q0 4 4 4M25 4q4 0 4 5v4q0 3 2 3-2 0-2 3v5q0 4-4 4" fill="none" stroke="#67675f" stroke-width="2"/><g fill="#3a6b80"><circle cx="10" cy="23" r="2"/><circle cx="16" cy="23" r="2"/><circle cx="22" cy="23" r="2"/></g></svg></button>
    <div class="flex w-3 shrink-0 justify-end pr-0.5"><span class="h-[26px] w-0.5 bg-[repeating-linear-gradient(to_bottom,#585858_0_2px,transparent_2px_6px)]"></span></div>
    <button aria-label="Ruler" class="flex w-12 shrink-0 justify-center"><svg class="size-8" viewBox="0 0 32 32"><path d="M1 24L23 1l7 7L8 31z" fill="#fcb813" stroke="#8a6a20" stroke-width=".6"/><path d="M5 20l3 3M8 17l2 2M11 14l3 3M14 11l2 2M17 8l3 3M20 5l2 2" stroke="#3c3014" stroke-width="1.300"/></svg></button>
  </div>

  <main class="flex min-h-0 flex-1">
    <!-- Docks -->
    <aside class="flex w-[370px] shrink-0 flex-col border-r border-[#6a6a6a] bg-[#323232]">
      <header class="flex h-[23px] shrink-0 items-center gap-1.5 border-b-2 border-[#9a9a9a] bg-linear-to-b from-[#393939] to-[#707070] pr-1 pl-[3px]">
        <button aria-label="Close pipeline browser" class="flex size-[13px] items-center justify-center rounded-full bg-[#444] text-white"><svg class="size-3"><use href="#i-x"/></svg></button>
        <button aria-label="Float pipeline browser" class="flex size-[13px] items-center justify-center rounded-full bg-[#444]"><svg class="size-3"><use href="#i-float"/></svg></button>
        <h2 class="flex-1 text-center text-xs font-normal text-[#e8e8e8]">Pipeline Browser</h2>
      </header>
      <ul class="flex h-[229px] shrink-0 flex-col border-b border-[#777] bg-[#1e1e1e] pt-[3px]">
        <li class="flex h-[23px] items-center pl-[27px]"><svg class="mr-1 h-[23px] w-[18px]" viewBox="0 0 18 23"><path d="M9 0v3M9 19v4" stroke="#888"/><rect x="5.500" y="4.500" width="7" height="14" fill="#a9a9a9" stroke="#555"/><path d="M7 6h4v2H7z" fill="#222"/><path d="M7 10h4M7 12h4" stroke="#666"/></svg>builtin:</li>
        <li class="flex h-[23px] items-center pl-[27px]"><svg class="mr-1 h-[18px] w-[18px]"><use href="#i-cube"/></svg>2d.vti</li>
        <li class="flex h-[23px] items-center pl-[27px]"><svg class="mr-1 h-[18px] w-[18px]"><use href="#i-cube"/></svg>Threshold1</li>
        <li class="flex h-[23px] items-center pl-[7px]"><button aria-label="Toggle visibility" class="mr-[5px]"><svg class="h-3 w-[15px]" viewBox="0 0 15 12"><path d="M0 6q7.500-9 15 0-7.500 9-15 0z" fill="#fff"/><circle cx="7.500" cy="6" r="4" fill="#1790cf"/><circle cx="7.500" cy="6" r="2" fill="#0a0a0a"/></svg></button><svg class="mr-1 h-[18px] w-[18px]" viewBox="0 0 18 18"><path d="M.5 1v16.500H18" fill="none" stroke="#8a8574"/><path d="M1 11h4v6H1z" fill="#0a9be8"/><path d="M5 5h3v12H5z" fill="#4fcdb5"/><path d="M8 1h3v16H8z" fill="#38a02c"/><path d="M11 8h4v9h-4z" fill="#f8d60d"/><path d="M15 12h3v5h-3z" fill="#f01414"/></svg>Histogram1</li>
      </ul>
      <div role="tablist" class="flex h-[23px] shrink-0 items-end justify-center bg-[#333] pr-px">
        <button role="tab" aria-selected="true" class="h-[21px] w-[88px] rounded-l-[5px] bg-[#0566e2] pr-1 text-white">Properties</button>
        <button role="tab" aria-selected="false" class="mb-px h-[21px] w-[94px] rounded-r-[5px] bg-[#656565] pl-1 text-[#dadada]">Information</button>
      </div>
      <header class="flex h-6 shrink-0 items-center gap-1.5 border-b-2 border-[#9a9a9a] bg-linear-to-b from-[#393939] to-[#707070] pr-1 pl-[3px]">
        <button aria-label="Close properties" class="flex size-[13px] items-center justify-center rounded-full bg-[#444] text-white"><svg class="size-3"><use href="#i-x"/></svg></button>
        <button aria-label="Float properties" class="flex size-[13px] items-center justify-center rounded-full bg-[#444]"><svg class="size-3"><use href="#i-float"/></svg></button>
        <h2 class="flex-1 text-center text-xs font-normal text-[#e8e8e8]">Properties</h2>
      </header>
      <form class="flex min-h-0 flex-1 flex-col overflow-hidden pr-[13px] pl-3" onsubmit="return false">
        <div class="mt-[17px] mr-[7px] ml-2 flex h-[21px] shrink-0 gap-1">
          <button disabled class="flex w-[87px] items-center justify-center gap-2 rounded-[5px] bg-[#606060] text-[#8c8c8c]"><svg class="size-3.5" viewBox="0 0 14 14"><path d="M2 6l4-1 3 1v6l-3 1-4-1z" fill="#999"/><path d="M8 5l4-4 1 4-3 2z" fill="#64855a"/></svg>Apply</button>
          <button disabled class="flex w-[87px] items-center justify-center gap-2 rounded-[5px] bg-[#464646] text-[#7d7d7d]"><svg class="size-4" viewBox="0 0 16 16"><circle cx="8" cy="8" r="6.500" fill="none" stroke="#953030" stroke-width="1.600"/><path d="M12.500 3.500l-9 9" stroke="#953030" stroke-width="1.600"/></svg>Reset</button>
          <button class="flex w-[93px] items-center justify-center gap-2 rounded-[5px] bg-[#666] text-white"><svg class="size-3 text-[#fa0d0d]"><use href="#i-x"/></svg>Delete</button>
          <button aria-label="Help" class="w-[50px] rounded-[5px] bg-[#666] text-[17px] font-normal text-[#9bd77b]">?</button>
        </div>
        <div class="mt-[22px] flex h-[27px] shrink-0 items-center justify-between">
          <input aria-label="Search" placeholder="Search ... (use Esc to clear text)" class="ml-0.5 h-5 w-[312px] border-b border-[#4a4a4a] bg-[#272727] text-white outline-none placeholder:text-[#8a8a8a]">
          <button aria-label="Toggle advanced properties" class="flex size-[27px] items-center justify-center border border-[#646464] bg-[#555]"><svg class="size-4" viewBox="0 0 16 16"><path d="M6.500 1h3l.4 2 1.600.9 2-.7 1.500 2.600-1.500 1.400v1.600l1.500 1.400-1.500 2.600-2-.7-1.600.9-.4 2h-3l-.4-2-1.600-.9-2 .7L1 10.200l1.500-1.400V7.200L1 5.800l1.500-2.600 2 .7L6.100 3zM8 5.500a2.500 2.500 0 1 0 0 5 2.500 2.500 0 0 0 0-5z" fill="#e0e0e0" fill-rule="evenodd"/></svg></button>
        </div>
        <div class="mt-[15px] mr-[7px] flex h-[27px] shrink-0 items-center gap-1.5">
          <button aria-expanded="true" class="flex h-[27px] w-[162px] items-center border border-[#1f1f1f] bg-[#2c2c2c] pr-3 pl-[15px] text-sm leading-4 font-bold text-white"><span class="mr-3 h-1 w-[13px] shrink-0 bg-[#1493bd]"></span><span class="overflow-hidden whitespace-nowrap">Properties (Hist</span></button>
          <button aria-label="Copy properties" class="-ml-px flex h-[21px] w-[38px] items-center justify-center rounded-[5px] bg-[#666]"><svg class="size-4"><use href="#i-copy"/></svg></button>
          <button aria-label="Paste properties" disabled class="flex h-[21px] w-[38px] items-center justify-center rounded-[5px] bg-[#474747]"><svg class="size-4"><use href="#i-paste"/></svg></button>
          <button aria-label="Restore defaults" class="flex h-[21px] w-[38px] items-center justify-center rounded-[5px] bg-[#666]"><svg class="size-4"><use href="#i-refresh"/></svg></button>
          <button aria-label="Save defaults" class="flex h-[21px] w-[38px] items-center justify-center rounded-[5px] bg-[#666]"><svg class="size-4"><use href="#i-save"/></svg></button>
        </div>
        <div class="mt-6 mr-[7px] flex h-[21px] shrink-0 items-center justify-between">
          <label for="arr">Select Input Array</label>
          <div class="relative h-[21px] w-[212px]"><select id="arr" class="h-full w-full appearance-none rounded-[5px] bg-[#666] pl-[29px] text-[#e4e4e4]"><option>Scalars_</option></select><span class="absolute top-2 left-4 size-1 rounded-full bg-[#f9b914]"></span><span class="pointer-events-none absolute top-0.5 right-0.5 flex h-[17px] w-[17px] items-center justify-center rounded bg-[#0566e2] text-white"><svg class="h-[14px] w-2.5"><use href="#i-chev"/></svg></span></div>
        </div>
        <div class="mt-4 flex h-5 shrink-0 items-center">
          <label for="bins" class="w-[122px]">Bin Count</label>
          <input aria-label="Bin Count slider" type="range" min="1" max="256" value="10" class="h-5 w-20 appearance-none bg-[linear-gradient(#484848,#484848)] bg-[length:100%_4px] bg-center bg-no-repeat [&::-webkit-slider-thumb]:size-5 [&::-webkit-slider-thumb]:appearance-none [&::-webkit-slider-thumb]:rounded-full [&::-webkit-slider-thumb]:bg-[#868686]">
          <input id="bins" value="10" class="ml-4 h-5 w-[125px] border-b border-[#4a4a4a] bg-[#272727] pl-px text-white outline-none">
        </div>
        <div class="mt-3.5 mr-[7px] flex h-[21px] shrink-0 items-center justify-between">
          <label for="comp">Component</label>
          <div class="relative h-[21px] w-[212px] text-[#777]"><select id="comp" disabled class="h-full w-full appearance-none rounded-[5px] bg-[#484848]"><option></option></select><svg class="absolute top-[3px] right-[5px] h-[15px] w-2.5"><use href="#i-chev"/></svg></div>
        </div>
        <div class="mt-[23px] mr-[7px] flex h-[27px] shrink-0 items-center gap-1.5">
          <button aria-expanded="true" class="flex h-[27px] w-[162px] items-center border border-[#1f1f1f] bg-[#2c2c2c] pr-3 pl-[15px] text-sm leading-4 font-bold text-white"><span class="mr-3 h-1 w-[13px] shrink-0 bg-[#1493bd]"></span><span class="overflow-hidden whitespace-nowrap">Display (XYBarC</span></button>
          <button aria-label="Copy display" class="-ml-px flex h-[21px] w-[38px] items-center justify-center rounded-[5px] bg-[#666]"><svg class="size-4"><use href="#i-copy"/></svg></button>
          <button aria-label="Paste display" disabled class="flex h-[21px] w-[38px] items-center justify-center rounded-[5px] bg-[#474747]"><svg class="size-4"><use href="#i-paste"/></svg></button>
          <button aria-label="Restore display defaults" class="flex h-[21px] w-[38px] items-center justify-center rounded-[5px] bg-[#666]"><svg class="size-4"><use href="#i-refresh"/></svg></button>
          <button aria-label="Save display defaults" class="flex h-[21px] w-[38px] items-center justify-center rounded-[5px] bg-[#666]"><svg class="size-4"><use href="#i-save"/></svg></button>
        </div>
        <div class="mt-6 mr-[7px] flex h-[21px] shrink-0 items-center justify-between">
          <label for="attr">Attribute Type</label>
          <div class="relative h-[21px] w-[234px]"><select id="attr" class="h-full w-full appearance-none rounded-[5px] bg-[#666] pl-[29px] text-[#e4e4e4]"><option>Row Data</option></select><svg class="absolute top-1 left-3 h-3 w-3" viewBox="0 0 12 12"><path d="M0 1h2M0 3.500h2M0 6h2M0 8.500h2M0 11h2M3 1h9M3 3.500h9M3 6h9M3 8.500h9M3 11h9" stroke="#e6e6e6" stroke-width="1.800"/></svg><span class="pointer-events-none absolute top-0.5 right-0.5 flex h-[17px] w-[17px] items-center justify-center rounded bg-[#0566e2] text-white"><svg class="h-[14px] w-2.5"><use href="#i-chev"/></svg></span></div>
        </div>
        <h3 class="mt-4 h-[18px] shrink-0 border-b border-[#707070] text-sm leading-4 font-bold text-white">X Axis Parameters</h3>
        <label class="mt-[9px] flex h-[15px] shrink-0 items-center gap-[5px] pl-[3px]"><input type="checkbox" class="size-[14px] appearance-none rounded-[3px] bg-[#606060]">Use Index For XAxis</label>
        <div class="mt-3 mr-[7px] flex h-[21px] shrink-0 items-center justify-between">
          <label for="xarr">X Array Name</label>
          <div class="relative h-[21px] w-[234px]"><select id="xarr" class="h-full w-full appearance-none rounded-[5px] bg-[#666] pl-2 text-[#e4e4e4]"><option>bin_extents</option></select><span class="pointer-events-none absolute top-0.5 right-0.5 flex h-[17px] w-[17px] items-center justify-center rounded bg-[#0566e2] text-white"><svg class="h-[14px] w-2.5"><use href="#i-chev"/></svg></span></div>
        </div>
        <h3 class="mt-4 shrink-0 text-sm leading-4 font-bold text-white">Series Parameters</h3>
      </form>
    </aside>

    <!-- Views -->
    <section class="flex min-w-0 flex-1 flex-col bg-[#343434]">
      <div role="tablist" class="flex h-[27px] shrink-0 items-start justify-center bg-[linear-gradient(#333_0_10px,#484848_10px_11px,#373737_11px)]">
        <div class="mt-px flex h-5 w-[134px] items-center rounded-l-[5px] bg-[#0566e2] text-white"><svg class="ml-0.5 size-4" viewBox="0 0 16 16"><rect x=".5" y="1.500" width="15" height="13" fill="#0a62d4" stroke="#123a74"/><rect x="1" y="2" width="14" height="4" fill="#273c66"/></svg><button role="tab" aria-selected="true" class="flex-1">Layout #1</button><button aria-label="Close layout" class="mr-2 flex size-[14px] items-center justify-center rounded-full bg-[#444] text-white"><svg class="size-3"><use href="#i-x"/></svg></button></div>
        <button aria-label="New layout" class="h-5 w-[30px] rounded-r-[5px] bg-[#636363] pl-1 text-[15px] font-normal text-[#e4e4e4]">+</button>
      </div>
      <div class="grid min-h-0 flex-1 grid-cols-[566fr_564fr] gap-1 pr-px pl-[3px]">

        <article class="flex min-w-0 flex-col">
          <div role="toolbar" aria-label="RenderView1 tools" class="flex h-[30px] shrink-0 items-center bg-[#303030]">
            <button aria-label="Camera undo" class="flex w-[30px] shrink-0 justify-center"><svg class="size-6" viewBox="0 0 24 24"><use href="#i-cam" y="-2"/><path d="M4 20l1-7 2 2q8-4 9 5-3-4-6-2l2 2z" fill="#ee1414"/></svg></button>
            <button aria-label="Camera redo" disabled class="flex w-[29px] shrink-0 justify-center opacity-50"><svg class="size-6" viewBox="0 0 24 24"><use href="#i-cam" y="-2"/><path d="M20 20l-1-7-2 2q-8-4-9 5 3-4 6-2l-2 2z" fill="#9bd77b"/></svg></button>
            <span class="mx-0.5 h-7 w-px shrink-0 bg-[repeating-linear-gradient(to_bottom,#666_0_1px,transparent_1px_3px)]"></span>
            <button aria-label="Capture screenshot" class="flex w-[31px] shrink-0 justify-center"><svg class="size-6" viewBox="0 0 24 24"><use href="#i-cam"/><path d="M3 6V3h3M18 3h3v3M3 18v3h3M18 21h3v-3" fill="none" stroke="#888"/></svg></button>
            <span class="mx-0.5 h-7 w-px shrink-0 bg-[repeating-linear-gradient(to_bottom,#666_0_1px,transparent_1px_3px)]"></span>
            <button disabled class="w-[31px] shrink-0 text-[11px] text-[#646250]">2D</button>
            <button aria-label="Adjust camera" disabled class="flex w-[29px] shrink-0 justify-center"><svg class="size-6" viewBox="0 0 24 24"><g opacity=".55"><use href="#i-cam" y="-2"/></g><path d="M13 13l7 8" stroke="#8a6a20" stroke-width="2.500"/></svg></button>
            <span class="mx-0.5 h-7 w-px shrink-0 bg-[repeating-linear-gradient(to_bottom,#666_0_1px,transparent_1px_3px)]"></span>
            <button aria-label="Add selection" class="flex w-[31px] shrink-0 justify-center"><svg class="size-6" viewBox="0 0 24 24"><use href="#i-sel"/><use href="#i-plus"/></svg></button>
            <button aria-label="Subtract selection" class="flex w-[29px] shrink-0 justify-center"><svg class="size-6" viewBox="0 0 24 24"><use href="#i-sel"/><use href="#i-minus"/></svg></button>
            <button aria-label="Toggle selection" class="flex w-[30px] shrink-0 justify-center"><svg class="size-6" viewBox="0 0 24 24"><use href="#i-sel"/><use href="#i-plusminus"/></svg></button>
            <span class="mx-0.5 h-7 w-px shrink-0 bg-[repeating-linear-gradient(to_bottom,#666_0_1px,transparent_1px_3px)]"></span>
            <button aria-label="Select cells" class="flex w-[30px] shrink-0 justify-center"><svg class="size-6" viewBox="0 0 24 24"><use href="#i-sel"/><path d="M12 6l6 11H6z" fill="#9bd77b"/><path d="M16 15l5 7" stroke="#888" stroke-width="2"/></svg></button>
            <button aria-label="Select points" class="flex w-[29px] shrink-0 justify-center"><svg class="size-6" viewBox="0 0 24 24"><use href="#i-sel"/><path d="M12 6l6 11H6z" fill="none" stroke="#999"/><g fill="#c06040"><circle cx="12" cy="6" r="1.500"/><circle cx="6" cy="17" r="1.500"/><circle cx="18" cy="17" r="1.500"/></g><path d="M16 15l5 7" stroke="#888" stroke-width="2"/></svg></button>
            <div class="flex min-w-0 flex-1 items-center justify-end gap-1 pr-3"><svg class="h-3 w-4 shrink-0"><use href="#i-more"/></svg><span class="text-white">RenderView1</span></div>
            <div class="flex shrink-0 gap-px">
              <button aria-label="Split horizontally" class="flex h-[29px] w-[30px] items-center justify-center border border-[#5c5c5c] bg-[#474747]"><svg class="h-4 w-3.5"><use href="#i-splitv"/></svg></button>
              <button aria-label="Split vertically" class="flex h-[29px] w-[29px] items-center justify-center border border-[#5c5c5c] bg-[#474747]"><svg class="h-4 w-3.5"><use href="#i-splith"/></svg></button>
              <button aria-label="Maximize" class="flex h-[29px] w-[30px] items-center justify-center border border-[#5c5c5c] bg-[#474747]"><svg class="size-[18px]"><use href="#i-max"/></svg></button>
              <button aria-label="Close view" class="flex h-[29px] w-[29px] items-center justify-center border border-[#5c5c5c] bg-[#474747]"><span class="flex size-[15px] items-center justify-center rounded-full bg-[#3a3a3a] text-white"><svg class="size-3"><use href="#i-x"/></svg></span></button>
            </div>
          </div>
          <div class="relative mx-[3px] mt-[3px] mb-[5px] min-h-0 flex-1 overflow-hidden bg-[#52576e]">
            <canvas id="terrain" width="559" height="317" class="absolute inset-x-0 top-[25%] h-[44.7%] w-full"></canvas>
            <svg class="absolute bottom-[78px] left-[79px] h-[68px] w-[70px] font-['Lato',sans-serif] font-normal" viewBox="0 0 70 68"><path d="M10 57V15" stroke="#9a9a3a" stroke-width="1.500"/><path d="M6.500 16L10 6l3.500 10z" fill="#f0f000"/><path d="M10 57.500h42" stroke="#c8283a"/><path d="M49 54l10 3.500-10 3.500z" fill="#ee0404"/><circle cx="10" cy="57" r="4.500" fill="#036403"/><g fill="#fff" font-size="15"><text x="12" y="18">Y</text><text x="13" y="57">Z</text><text x="51" y="58">X</text></g></svg>
            <svg class="absolute right-0 bottom-0 h-[255px] w-[125px] font-['Lato',sans-serif] font-normal" viewBox="0 0 125 255">
              <rect x="7" y="11" width="16" height="234" fill="url(#coolwarm)"/>
              <path d="M19 11.500h12M19 47.500h12M19 74.500h12M19 101.500h12M19 128.500h12M19 154.500h12M19 181.500h12M19 208.500h12M19 244.500h12" stroke="#cfd0cc"/>
              <g fill="#f4f4f4" font-size="17"><text x="38" y="15">1.9e+02</text><text x="38" y="52">160</text><text x="38" y="79">140</text><text x="38" y="106">120</text><text x="38" y="132">100</text><text x="37" y="159">80</text><text x="37" y="186">60</text><text x="37" y="212">40</text><text x="38" y="248">1.3e+01</text><text transform="translate(118 156) rotate(-90)" font-size="18">Scalars_</text></g>
            </svg>
          </div>
        </article>

        <article class="flex min-w-0 flex-col">
          <div role="toolbar" aria-label="BarChartView1 tools" class="flex h-[29px] shrink-0 items-center bg-[#303030]">
            <button aria-label="Capture screenshot" class="flex w-[29px] shrink-0 justify-center"><svg class="size-6" viewBox="0 0 24 24"><use href="#i-cam"/><path d="M3 6V3h3M18 3h3v3M3 18v3h3M18 21h3v-3" fill="none" stroke="#888"/></svg></button>
            <span class="mx-0.5 h-7 w-px shrink-0 bg-[repeating-linear-gradient(to_bottom,#666_0_1px,transparent_1px_3px)]"></span>
            <button aria-label="Add selection" class="flex w-[30px] shrink-0 justify-center"><svg class="size-6" viewBox="0 0 24 24"><use href="#i-sel"/><use href="#i-plus"/></svg></button>
            <button aria-label="Subtract selection" class="flex w-[29px] shrink-0 justify-center"><svg class="size-6" viewBox="0 0 24 24"><use href="#i-sel"/><use href="#i-minus"/></svg></button>
            <button aria-label="Toggle selection" class="flex w-[30px] shrink-0 justify-center"><svg class="size-6" viewBox="0 0 24 24"><use href="#i-sel"/><use href="#i-plusminus"/></svg></button>
            <span class="mx-0.5 h-7 w-px shrink-0 bg-[repeating-linear-gradient(to_bottom,#666_0_1px,transparent_1px_3px)]"></span>
            <button aria-label="Polygon selection" disabled class="flex w-[30px] shrink-0 justify-center"><svg class="size-6" viewBox="0 0 24 24"><g fill="#74402f"><circle cx="6" cy="5" r="1.300"/><circle cx="11" cy="7" r="1.300"/><circle cx="16" cy="5" r="1.300"/><circle cx="8" cy="11" r="1.300"/><circle cx="14" cy="11" r="1.300"/><circle cx="19" cy="9" r="1.300"/><circle cx="6" cy="16" r="1.300"/><circle cx="11" cy="16" r="1.300"/><circle cx="13" cy="20" r="1.300"/></g><path d="M15 15l5 5" stroke="#555" stroke-width="2"/></svg></button>
            <button aria-label="Rectangle selection" disabled class="flex w-[29px] shrink-0 justify-center"><svg class="size-6" viewBox="0 0 24 24"><g opacity=".6"><use href="#i-sel"/></g><path d="M14 14l6 2-2 1 3 4-1 1-4-4-1 1z" fill="#64855a"/></svg></button>
            <span class="min-w-0 flex-1 pr-3 text-right text-sm leading-4 font-bold text-white underline">BarChartView1</span>
            <div class="flex shrink-0 gap-px">
              <button aria-label="Split horizontally" class="flex h-[29px] w-[29px] items-center justify-center border border-[#5c5c5c] bg-[#474747]"><svg class="h-4 w-3.5"><use href="#i-splitv"/></svg></button>
              <button aria-label="Split vertically" class="flex h-[29px] w-[30px] items-center justify-center border border-[#5c5c5c] bg-[#474747]"><svg class="h-4 w-3.5"><use href="#i-splith"/></svg></button>
              <button aria-label="Maximize" class="flex h-[29px] w-[29px] items-center justify-center border border-[#5c5c5c] bg-[#474747]"><svg class="size-[18px]"><use href="#i-max"/></svg></button>
              <button aria-label="Close view" class="flex h-[29px] w-[30px] items-center justify-center border border-[#5c5c5c] bg-[#474747]"><span class="flex size-[15px] items-center justify-center rounded-full bg-[#3a3a3a] text-white"><svg class="size-3"><use href="#i-x"/></svg></span></button>
            </div>
          </div>
          <div class="mt-px mb-[3px] min-h-0 flex-1 border-2 border-[#0a97fb] bg-[#52606e] p-px">
            <svg id="chart" class="block h-full w-full bg-white font-['Lato',sans-serif] font-normal" viewBox="0 0 558 708" preserveAspectRatio="none" role="img" aria-label="Histogram of bin_values"></svg>
          </div>
        </article>
      </div>
    </section>
  </main>

  <!-- Status bar -->
  <footer class="flex h-[27px] shrink-0 items-stretch border-t border-[#555] bg-[#2f2f2f] pt-[3px]">
    <div class="flex-1"></div>
    <button aria-label="Abort" disabled class="flex w-[22px] items-center justify-center border border-b-0 border-[#474747] bg-[#383838] text-[#a52a35]"><svg class="size-3"><use href="#i-x"/></svg></button>
    <div class="ml-[3px] w-[474px] border-t border-l border-[#a8a8a8]"></div>
    <div role="progressbar" aria-valuenow="40.8" aria-valuemin="0" aria-valuemax="100" aria-label="Memory use" class="ml-2 w-[498px] bg-[linear-gradient(90deg,transparent_40.4%,#1e1e1e_40.4%),linear-gradient(#d0fad0,#a9dda9)]">
      <span class="block bg-[linear-gradient(90deg,#000_40.4%,#dadada_40.4%)] bg-clip-text text-center leading-6 text-transparent">MLIB-KC-STU-LAP-C02DQBNFQ05D: 3.3 GiB/8.0 GiB 40.8%</span>
    </div>
  </footer>
</div>

<script>
// Histogram
const chart = document.getElementById('chart');
const X0 = 48.5, X1 = 547.5, Y0 = 688.5, Y1 = 11;
const px = v => X0 + (v - 10) / 180 * (X1 - X0);
const py = v => Y0 - v / 2.7e6 * (Y0 - Y1);
let out = '';
for (let v = 0; v <= 27; v++) {
  const y = Math.round(py(v * 1e5) - .5) + .5;
  const label = v > 9 ? (v / 10) + 'e+6' : String(v * 100000);
  out += `<path d="M${X0} ${y}H${X1}" stroke="#f2f2f2"/><path d="M${X0 - 3} ${y}h3" stroke="#333"/><text x="46" y="${y + 3}" text-anchor="end" font-size="${v > 9 ? 13 : 12}">${label}</text>`;
}
for (let v = 10; v <= 190; v += 10) {
  const x = Math.round(px(v) - .5) + .5;
  out += `<path d="M${x} ${Y1}V${Y0}" stroke="#f2f2f2"/><path d="M${x} ${Y0}v3" stroke="#333"/><text x="${x}" y="701" text-anchor="middle">${v}</text>`;
}
[88, 243, 398, 710, 1588, 2700, 1770, 538, 236, 133].forEach((n, i) => {
  const x = Math.round(61 + i * 48.25) + .5, y = Math.round(py(n * 1000) - .5) + .5;
  out += `<rect x="${x}" y="${y}" width="39" height="${Y0 - y}" fill="#f80000" stroke="#5a1414"/>`;
});
out += `<path d="M${X0} ${Y1}V${Y0}H${X1}" fill="none" stroke="#333"/>`;
out += '<rect x="465.500" y="10.500" width="82" height="17" fill="#fff" stroke="#444"/><rect x="468.500" y="13.500" width="11" height="11" fill="#f80000" stroke="#5a1414"/><text x="481" y="23" font-size="14">bin_values</text>';
chart.innerHTML = `<g fill="#222" font-size="12">${out}</g>`;

// Terrain: an elevation field with carved rivers, coloured through a diverging map
const W = 559, H = 317;
let seed = 7;
const rnd = () => (seed = (seed * 16807) % 2147483647) / 2147483647;
const grid = Array.from({length: 4096}, rnd);
function noise(x, y) {
  const xi = Math.floor(x), yi = Math.floor(y), fx = x - xi, fy = y - yi;
  const u = fx * fx * (3 - 2 * fx), w = fy * fy * (3 - 2 * fy);
  const g = (a, b) => grid[((a & 63) + (b & 63) * 64)];
  return (g(xi, yi) * (1 - u) + g(xi + 1, yi) * u) * (1 - w) + (g(xi, yi + 1) * (1 - u) + g(xi + 1, yi + 1) * u) * w;
}
const fbm = (x, y) => noise(x, y) * .5 + noise(x * 2.1, y * 2.1) * .27 + noise(x * 4.3, y * 4.3) * .15 + noise(x * 9, y * 9) * .08;
function layer() {
  const c = document.createElement('canvas'); c.width = W; c.height = H;
  const g = c.getContext('2d', {willReadFrequently: true});
  g.fillStyle = '#000'; g.fillRect(0, 0, W, H);
  g.setTransform(W / 1537, 0, 0, H / 951, -18 * W / 1537, -24 * H / 951);
  g.lineCap = g.lineJoin = 'round';
  return g;
}
const base = layer();
base.fillStyle = 'rgb(140,140,140)'; base.fillRect(0, 0, 1600, 1000);
function area(v, blur, pts) {
  base.filter = `blur(${blur}px)`; base.fillStyle = `rgb(${v},${v},${v})`;
  base.beginPath(); pts.forEach((p, i) => i % 2 || base.lineTo(p, pts[i + 1])); base.fill();
}
area(124, 12, [-40,-20, 380,-20, 410,200, 420,400, 280,520, 190,380, 60,400, -40,420]);
area(158, 10, [390,0, 950,0, 880,300, 720,440, 640,480, 520,430, 440,360, 390,200]);
area(143, 16, [600,20, 960,20, 870,260, 720,330, 620,250]);
area(176, 5, [425,0, 540,0, 500,120, 545,250, 560,330, 530,440, 490,340, 440,200]);
area(172, 4, [390,100, 430,120, 490,290, 500,350, 420,350, 410,240, 385,180]);
area(160, 10, [950,24, 1440,0, 1480,150, 1330,400, 1180,330, 950,390, 800,440]);
area(176, 9, [1080,0, 1420,0, 1475,150, 1400,215, 1290,190, 1220,280, 1050,310, 1000,200]);
area(187, 7, [1220,170, 1400,215, 1475,170, 1430,180, 1300,160, 1180,200, 1150,280, 1200,270]);
area(163, 3, [1260,200, 1330,185, 1395,215, 1370,300, 1240,260]);
area(122, 5, [1450,0, 1600,0, 1600,420, 1400,440, 1390,230, 1480,210]);
area(165, 3, [220,230, 260,150, 290,150, 310,230, 290,330, 300,420, 200,400, 130,420, 150,290, 180,330, 250,290]);
area(163, 6, [60,390, 180,370, 300,400, 270,520, 260,620, 130,700, 90,690, 100,560, 60,480]);
area(172, 3, [95,580, 150,590, 170,680, 100,720]);
area(168, 5, [375,610, 430,560, 450,470, 490,500, 530,650, 520,780, 420,830, 380,790, 360,700]);
area(196, 4, [395,600, 435,570, 465,580, 440,600]);
area(202, 3, [455,635, 490,620, 485,645, 465,650]);
area(192, 5, [215,640, 255,610, 250,650]);
area(152, 12, [540,500, 640,620, 760,640, 740,700, 640,720, 560,780, 520,620]);
area(158, 9, [850,660, 970,600, 990,980, 840,960, 830,760]);
area(160, 3, [900,500, 980,480, 1000,570, 900,640, 870,560]);
area(152, 5, [640,440, 850,400, 870,560, 800,540, 700,520]);
area(114, 12, [120,740, 350,740, 400,860, 380,1000, 100,1000]);
area(98, 5, [350,790, 400,800, 410,870, 370,1000, 270,1000, 320,880]);
area(121, 14, [430,860, 560,780, 820,800, 850,1000, 400,1000]);
area(70, 5, [-30,470, 30,500, 45,600, 65,760, 45,830, -30,860]);
area(185, 4, [0,940, 60,925, 120,950, 200,970, 190,1000, 0,1000]);
area(150, 9, [1330,460, 1560,430, 1600,1000, 1440,1000, 1420,800, 1350,700]);
area(160, 8, [1350,560, 1440,500, 1500,600, 1430,700, 1360,680]);
area(168, 5, [1530,540, 1600,520, 1600,930, 1450,960, 1420,790, 1490,640]);
area(116, 9, [1200,600, 1260,600, 1340,800, 1440,880, 1440,1000, 1160,1000, 1190,800]);
area(84, 5, [1370,880, 1440,880, 1455,1000, 1370,960]);
area(184, 2, [1160,940, 1210,925, 1290,880, 1330,930, 1370,1000, 1150,1000]);
area(178, 8, [960,560, 1060,430, 1260,500, 1190,600, 1195,760, 1160,1000, 1020,1000, 940,800]);
area(212, 4, [1030,450, 1110,420, 1190,430, 1205,350, 1255,380, 1240,460, 1210,500, 1245,550, 1180,580, 1150,680, 1130,800, 1140,1000, 1030,1000, 975,840, 970,640, 1010,550]);
area(222, 9, [1060,500, 1190,510, 1210,545, 1150,640, 1100,840, 1010,860, 1000,700, 1030,600]);
area(254, 8, [1110,560, 1190,520, 1195,560, 1150,620, 1120,760, 1080,800, 1070,690, 1080,610]);

const rivers = [
  [3, 42, [10,350, 40,345, 55,300, 75,265, 95,235, 95,200, 125,180, 135,145, 160,165, 185,140, 210,100, 245,92, 290,78, 320,90, 335,120, 350,165, 340,215, 345,270, 330,310, 335,345, 350,378, 385,370, 410,370, 425,400, 430,420]],
  [2, 30, [430,420, 460,438, 500,455, 545,490, 580,488, 635,515, 650,525, 690,535, 735,575, 765,580, 790,618, 850,625, 885,605, 905,585]],
  [2, 46, [905,585, 890,545, 860,515, 860,490, 900,485, 905,455, 920,455, 930,485, 970,490, 990,450, 1000,410, 1040,395, 1060,365, 1110,365, 1150,350, 1200,318, 1240,312, 1275,335, 1305,360, 1312,400, 1320,440]],
  [1.5, 18, [1320,440, 1305,490, 1285,530, 1280,560, 1270,590, 1285,620, 1295,660, 1290,700, 1320,750, 1345,790, 1360,850, 1390,890, 1420,930, 1430,980]],
  [1, 40, [1060,380, 1080,440]], [1, 40, [1140,360, 1180,440]], [1, 40, [1300,500, 1220,490]],
  [1, 9, [1320,440, 1350,447, 1380,430, 1385,380, 1410,340, 1395,290, 1395,240, 1440,215, 1560,195]],
  [1, 8, [1380,430, 1415,420, 1420,390, 1450,370]],
  [1.500, 38, [790,618, 785,660, 790,710, 780,760]], [1, 12, [780,760, 800,830, 800,900, 812,980]],
  [1, 18, [780,760, 720,770, 680,790]], [1, 20, [790,690, 830,720, 880,745]], [.3, 6, [800,830, 840,880, 900,890, 970,880]],
  [1, 34, [725,545, 740,500, 780,450, 790,400, 810,330]], [.6, 10, [810,330, 850,300, 865,240, 900,200]], [1, 18, [725,540, 710,480]],
  [1.5, 30, [130,180, 140,210, 170,250, 190,275, 235,290]], [2, 26, [135,145, 130,110, 155,60, 130,24]],
  [1.5, 20, [130,110, 80,100, 50,75]], [2, 26, [320,90, 310,60, 280,10]], [1.5, 20, [320,85, 370,50, 355,24]],
  [1.5, 44, [350,380, 330,420, 290,480]], [1, 26, [345,385, 375,440, 355,520]], [.5, 8, [355,520, 280,590]], [1, 34, [415,400, 405,470, 400,540]],
  [1, 16, [580,488, 575,460, 560,400, 530,330]], [1, 18, [635,515, 625,450, 590,400, 585,330]], [1, 22, [635,520, 625,600]],
  [1.5, 24, [185,145, 215,200]], [1, 22, [180,270, 190,350]], [1, 22, [225,290, 240,340]], [2, 24, [95,200, 45,175]], [2, 20, [75,265, 25,240]], [1.5, 20, [60,280, 120,310]],
  [1, 26, [18,480, 40,560, 60,700, 70,760, 60,840, 90,900]], [.8, 20, [70,760, 140,730]]
];
const depth = layer();
const segs = [];
function walk(x, y, a, len, lvl, power) {
  const n = Math.max(2, Math.round(len / 7));
  for (let i = 0; i < n; i++) {
    a += (rnd() - .5) * .8;
    const nx = x + Math.cos(a) * 7, ny = y + Math.sin(a) * 7;
    segs.push([x, y, nx, ny, lvl, power * (1 - i / n * .75)]);
    x = nx; y = ny;
    if (lvl < 3 && rnd() < .4) walk(x, y, a + (rnd() < .5 ? -.8 : .8), len * .45 * rnd(), lvl + 1, power * .7);
  }
}
for (const [power, reach, pts] of rivers) {
  for (let i = 0; i < pts.length - 2; i += 2) {
    const dx = pts[i + 2] - pts[i], dy = pts[i + 3] - pts[i + 1], d = Math.hypot(dx, dy), n = Math.max(1, Math.round(d / 8)), ang = Math.atan2(dy, dx);
    let x = pts[i], y = pts[i + 1];
    for (let k = 1; k <= n; k++) {
      const j = k < n ? 7 : 0;
      const nx = pts[i] + dx * k / n + (rnd() - .5) * j, ny = pts[i + 1] + dy * k / n + (rnd() - .5) * j;
      segs.push([x, y, nx, ny, 0, power]); x = nx; y = ny;
      if (rnd() < .75) walk(x, y, ang + (rnd() < .5 ? -1 : 1) * (.9 + rnd() * .6), reach * (.4 + rnd()), 1, power);
    }
  }
}
function pass(widths, value, blur) {
  const t = layer();
  for (const s of [...segs].sort((a, b) => a[5] - b[5])) {
    const w = widths[s[4]]; if (!w) continue;
    const v = Math.min(255, value * (.4 + s[5] * .25));
    t.strokeStyle = `rgb(${v},${v},${v})`; t.lineWidth = w * (.35 + s[5] * .3);
    t.beginPath(); t.moveTo(s[0], s[1]); t.lineTo(s[2], s[3]); t.stroke();
  }
  depth.save(); depth.setTransform(1, 0, 0, 1, 0, 0);
  depth.globalCompositeOperation = 'lighten'; depth.filter = blur ? `blur(${blur}px)` : 'none';
  depth.drawImage(t.canvas, 0, 0); depth.restore();
}
pass([34, 13, 9, 7], 66, 1);
pass([15, 6, 4, 3], 105, .7);
pass([8, 3, 2, 0], 150, .4);
pass([5.5, 0, 0, 0], 225, .3);

const bd = base.getImageData(0, 0, W, H).data, dd = depth.getImageData(0, 0, W, H).data;
const stops = [[0,36,66,170],[.16,62,100,195],[.32,116,148,205],[.44,160,169,180],[.5,174,170,163],[.57,190,165,149],[.64,201,146,122],[.7,206,127,101],[.78,200,98,74],[.86,190,66,48],[.93,176,32,32],[1,160,0,20]];
const img = new ImageData(W, H);
for (let y = 0; y < H; y++) for (let x = 0; x < W; x++) {
  const wx = (fbm(x / 14, y / 14) - .5) * 20, wy = (fbm(x / 14 + 31, y / 14 + 17) - .5) * 20;
  const sx = Math.min(W - 1, Math.max(0, Math.round(x + wx))), sy = Math.min(H - 1, Math.max(0, Math.round(y + wy)));
  let h = bd[(sy * W + sx) * 4] / 255 + (fbm(x / 22 + 9, y / 30) - .5) * .07;
  const d = dd[(y * W + x) * 4] / 255;
  // Canyons cut high ground down to the plateau before they turn blue
  if (d > 0) h = Math.min(h, h + (.52 - h) * Math.min(1, d * 4));
  h = h * (1 - d) + .04 * d;
  h = Math.min(.999, Math.max(0, h));
  let k = 1; while (stops[k][0] < h) k++;
  const a = stops[k - 1], b = stops[k], f = (h - a[0]) / (b[0] - a[0]), o = (y * W + x) * 4;
  for (let c = 0; c < 3; c++) img.data[o + c] = a[c + 1] + (b[c + 1] - a[c + 1]) * f;
  img.data[o + 3] = 255;
}
document.getElementById('terrain').getContext('2d').putImageData(img, 0, 0);
</script>
</body>
</html>
